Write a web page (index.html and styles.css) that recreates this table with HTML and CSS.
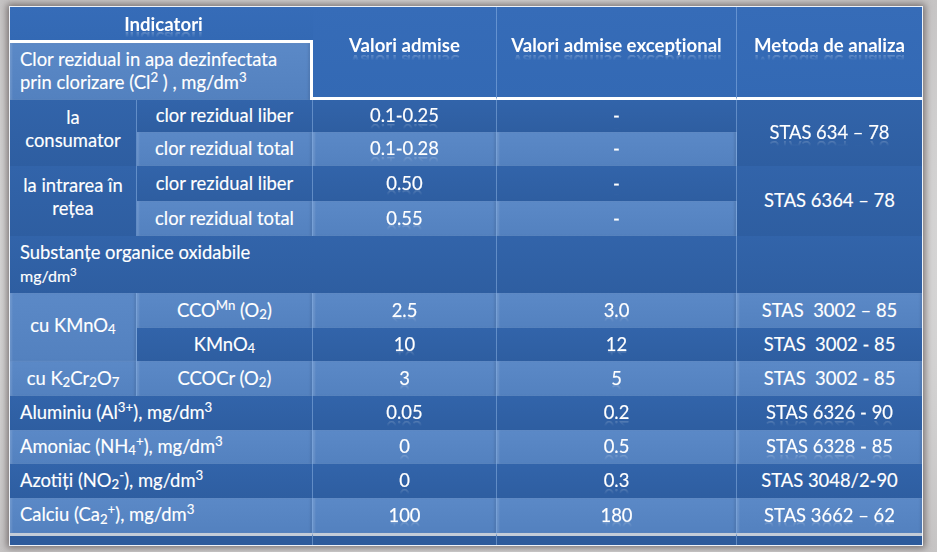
FILE: index.html
```html
<!DOCTYPE html>
<html lang="ro">
<head>
<meta charset="utf-8">
<title>Indicatori</title>
<link rel="stylesheet" href="styles.css">
</head>
<body>
<div class="frame">
  <div class="sheet">
    <div class="cell hd ind span2"><span class="rf">Indicatori</span></div>
    <div class="cell hd hcol rows2"><span class="rf">Valori admise</span></div>
    <div class="cell hd hcol rows2"><span class="rf">Valori admise excepțional</span></div>
    <div class="cell hd hcol rows2 last"><span class="rf">Metoda de analiza</span></div>
    <div class="cell lt clor span2">Clor rezidual in apa dezinfectata<br>prin clorizare (Cl<sup>2</sup> ) , mg/dm<sup>3</sup></div>

    <div class="cell dk ctr grp rows2"><span>la<br>consumator</span></div>
    <div class="cell dk ctr"><span>clor rezidual liber</span></div>
    <div class="cell dk ctr"><span class="rv">0.1-0.25</span></div>
    <div class="cell dk ctr"><span class="rv">-</span></div>
    <div class="cell dk ctr rows2 last"><span class="rv">STAS 634 – 78</span></div>
    <div class="cell lt ctr"><span>clor rezidual total</span></div>
    <div class="cell lt ctr"><span class="rv">0.1-0.28</span></div>
    <div class="cell lt ctr"><span class="rv">-</span></div>

    <div class="cell dk ctr grp rows2"><span>la intrarea în<br>rețea</span></div>
    <div class="cell dk ctr"><span>clor rezidual liber</span></div>
    <div class="cell dk ctr"><span class="rv">0.50</span></div>
    <div class="cell dk ctr"><span class="rv">-</span></div>
    <div class="cell dk ctr rows2 last"><span>STAS 6364 – 78</span></div>
    <div class="cell lt ctr"><span>clor rezidual total</span></div>
    <div class="cell lt ctr"><span class="rv">0.55</span></div>
    <div class="cell lt ctr"><span class="rv">-</span></div>

    <div class="cell dk span2 subst">Substanțe organice oxidabile<br><span class="small">mg/dm<sup>3</sup></span></div>
    <div class="cell dk"></div>
    <div class="cell dk"></div>
    <div class="cell dk last"></div>

    <div class="cell lt ctr rows2 grp2"><span>cu KMnO<sub>4</sub></span></div>
    <div class="cell lt ctr"><span>CCO<sup class="mn">Mn</sup> (O<sub>2</sub>)</span></div>
    <div class="cell lt ctr"><span class="rv">2.5</span></div>
    <div class="cell lt ctr"><span class="rv">3.0</span></div>
    <div class="cell lt ctr last"><span>STAS&nbsp; 3002 – 85</span></div>
    <div class="cell dk ctr"><span>KMnO<sub>4</sub></span></div>
    <div class="cell dk ctr"><span class="rv">10</span></div>
    <div class="cell dk ctr"><span class="rv">12</span></div>
    <div class="cell dk ctr last"><span>STAS&nbsp; 3002 - 85</span></div>

    <div class="cell lt ctr"><span>cu K<sub>2</sub>Cr<sub>2</sub>O<sub>7</sub></span></div>
    <div class="cell lt ctr"><span>CCOCr (O<sub>2</sub>)</span></div>
    <div class="cell lt ctr"><span class="rv">3</span></div>
    <div class="cell lt ctr"><span class="rv">5</span></div>
    <div class="cell lt ctr last"><span>STAS&nbsp; 3002 - 85</span></div>

    <div class="cell dk span2 name"><span>Aluminiu (Al<sup>3+</sup>), mg/dm<sup>3</sup></span></div>
    <div class="cell dk ctr"><span class="rv">0.05</span></div>
    <div class="cell dk ctr"><span class="rv">0.2</span></div>
    <div class="cell dk ctr last"><span class="rv">STAS 6326 - 90</span></div>

    <div class="cell lt span2 name"><span>Amoniac (NH<sub>4</sub><sup>+</sup>), mg/dm<sup>3</sup></span></div>
    <div class="cell lt ctr"><span class="rv">0</span></div>
    <div class="cell lt ctr"><span class="rv">0.5</span></div>
    <div class="cell lt ctr last"><span class="rv">STAS 6328 - 85</span></div>

    <div class="cell dk span2 name"><span>Azotiți (NO<sub>2</sub><sup>-</sup>), mg/dm<sup>3</sup></span></div>
    <div class="cell dk ctr"><span class="rv">0</span></div>
    <div class="cell dk ctr"><span class="rv">0.3</span></div>
    <div class="cell dk ctr last"><span>STAS 3048/2-90</span></div>

    <div class="cell lt span2 name"><span>Calciu (Ca<sub>2</sub><sup>+</sup>), mg/dm<sup>3</sup></span></div>
    <div class="cell lt ctr"><span class="rv">100</span></div>
    <div class="cell lt ctr"><span class="rv">180</span></div>
    <div class="cell lt ctr last"><span class="rv">STAS 3662 – 62</span></div>

    <div class="cell dk cut span2"></div>
    <div class="cell dk cut"></div>
    <div class="cell dk cut"></div>
    <div class="cell dk cut last"></div>
  </div>
</div>
</body>
</html>
```

FILE: styles.css
```css
html, body {
  margin: 0;
  padding: 0;
}
body {
  width: 937px;
  height: 552px;
  overflow: hidden;
  background: radial-gradient(ellipse at center, #dcdcdc 55%, #c6c4c4 100%);
  font-family: Lato, "Open Sans", "DejaVu Sans", sans-serif;
  color: #ffffff;
}
.frame {
  padding: 7px 15px 0 10px;
}
.sheet {
  display: grid;
  grid-template-columns: 127px 176px 184px 240px 185px;
  grid-template-rows: 33px 60px 32px 34px 35px 35px 57px 35px 33px 35px 34px 34px 34px 35px 12px;
  width: 912px;
  background: #3066ad;
  box-shadow: 0 0 0 1px #eef2f8, 0 0 7px 3px rgba(60, 50, 50, 0.6);
}
.cell {
  box-sizing: border-box;
  font-size: 18.4px;
  line-height: 23px;
  border-right: 1px solid rgba(160, 195, 240, 0.45);
  overflow: hidden;
  white-space: nowrap;
  -webkit-text-stroke: 0.15px #ffffff;
}
.cell.last {
  border-right: none;
}
.span2 { grid-column: span 2; }
.rows2 { grid-row: span 2; }

.dk {
  background: linear-gradient(#3264aa, #2e5ea1);
}
.lt {
  background: linear-gradient(#5b89c7, #5381bf);
  box-shadow: inset 2px 0 2px rgba(255, 255, 255, 0.12), inset -2px 0 2px rgba(0, 0, 0, 0.08);
}
.ctr {
  display: flex;
  align-items: center;
  justify-content: center;
  text-align: center;
  padding-bottom: 1px;
}
.grp {
  padding-bottom: 8px;
  line-height: 23px;
}
.grp2 {
  padding-bottom: 4px;
}

.hd {
  background: linear-gradient(#366cb8, #3369b4);
  font-weight: 700;
  font-size: 18.6px;
  -webkit-text-stroke: 0;
}
.ind {
  display: flex;
  justify-content: center;
  align-items: center;
  padding-top: 1px;
  padding-left: 4px;
  border-right: none;
}
.hcol {
  display: flex;
  justify-content: center;
  align-items: flex-start;
  padding-top: 29px;
  border-bottom: 3px solid #ffffff;
}
.clor {
  border-top: 3px solid #ffffff;
  border-right: 3px solid #ffffff;
  padding: 5px 10px 0 10px;
  line-height: 23px;
}
.subst {
  padding: 5px 10px 0 10px;
  border-right-color: transparent;
}
.small {
  font-size: 16px;
}
.name {
  display: flex;
  align-items: center;
  padding: 0 10px 2px 10px;
}
.rf {
  display: inline-block;
  line-height: 1;
  -webkit-box-reflect: below -3px linear-gradient(transparent 55%, rgba(255, 255, 255, 0.35));
}
.rv {
  display: inline-block;
  line-height: 1;
  -webkit-box-reflect: below -4px linear-gradient(transparent 60%, rgba(255, 255, 255, 0.25));
}
sup, sub {
  font-size: 0.72em;
  line-height: 0;
  position: relative;
  vertical-align: baseline;
}
sup { top: -0.5em; }
sub { top: 0.22em; }
sup.mn { top: -0.5em; }
.cut {
  border-top: 3px solid #c3ccd8;
  background: #2d5b9c;
}
```
